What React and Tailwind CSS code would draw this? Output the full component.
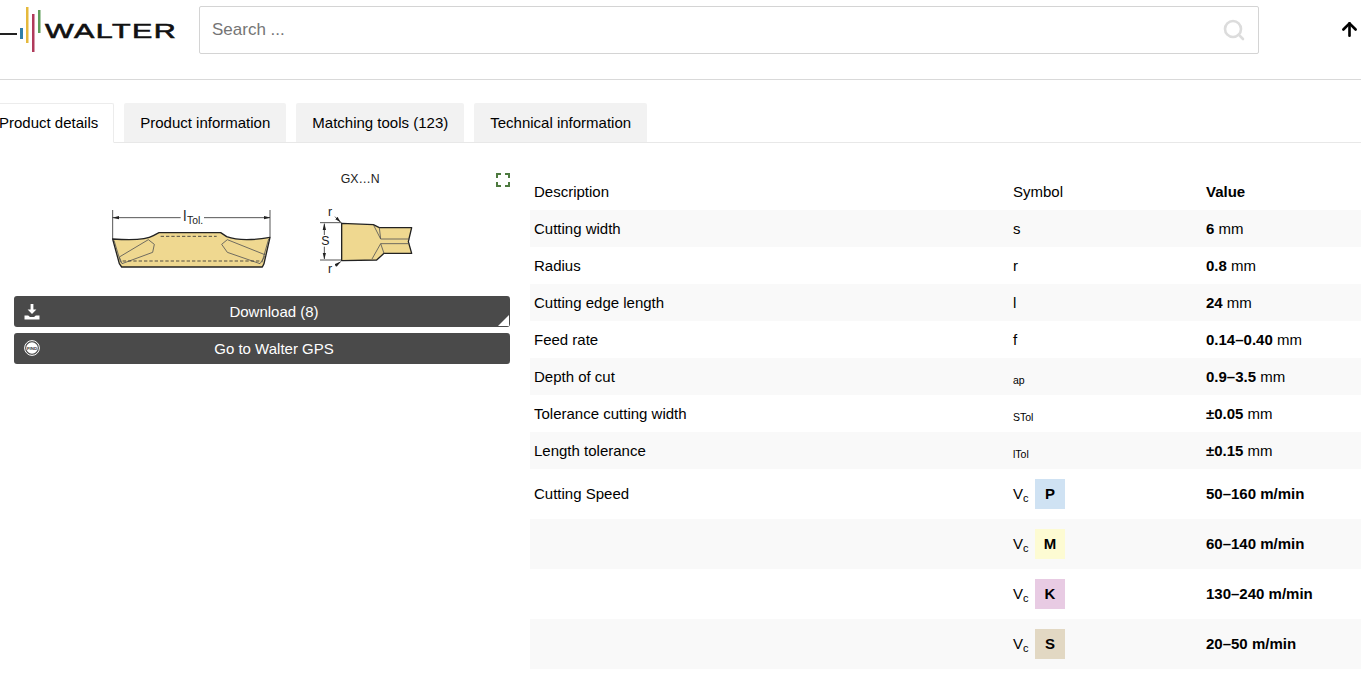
import React from 'react';
import { ArrowUp, Search } from 'lucide-react';

const ROWS = [
  { label: 'Cutting width', symbol: 's', value: '6', unit: 'mm' },
  { label: 'Radius', symbol: 'r', value: '0.8', unit: 'mm' },
  { label: 'Cutting edge length', symbol: 'l', value: '24', unit: 'mm' },
  { label: 'Feed rate', symbol: 'f', value: '0.14–0.40', unit: 'mm' },
  { label: 'Depth of cut', sub: 'ap', value: '0.9–3.5', unit: 'mm' },
  { label: 'Tolerance cutting width', sub: 'STol', value: '±0.05', unit: 'mm' },
  { label: 'Length tolerance', sub: 'lTol', value: '±0.15', unit: 'mm' },
];

const SPEEDS = [
  { label: 'Cutting Speed', code: 'P', color: 'bg-[#cfe2f3]', value: '50–160 m/min' },
  { label: '', code: 'M', color: 'bg-[#fdfbd3]', value: '60–140 m/min' },
  { label: '', code: 'K', color: 'bg-[#e8cbe3]', value: '130–240 m/min' },
  { label: '', code: 'S', color: 'bg-[#e2d8c3]', value: '20–50 m/min' },
];

function Logo() {
  return (
    <div className="flex items-center w-[199px] h-[60px] shrink-0">
      <svg width="45" height="60" viewBox="0 0 45 60" className="shrink-0">
        <rect x="0" y="33" width="17" height="2" fill="#222" />
        <rect x="20" y="28" width="3" height="11" fill="#2f7fa8" />
        <rect x="26" y="7" width="2.5" height="36" fill="#e5b93c" />
        <rect x="32" y="14" width="2.5" height="38" fill="#b03a5b" />
        <rect x="38" y="10" width="2.5" height="23" fill="#5f9e5a" />
      </svg>
      <span className="font-['Liberation_Sans',sans-serif] text-[21px] leading-none text-[#111] tracking-[1px] scale-x-[1.45] origin-left [-webkit-text-stroke:0.6px_#111]">
        WALTER
      </span>
    </div>
  );
}

function Tabs() {
  const tabs = ['Product information', 'Matching tools (123)', 'Technical information'];
  return (
    <div className="flex gap-[10px] h-[40px] mt-[23px] border-b border-[#e8e8e8]">
      <div className="-ml-[17px] h-[40px] px-[15px] pt-[1px] flex items-center bg-white border border-[#ececec] border-b-white rounded-t-[2px]">
        Product details
      </div>
      {tabs.map((t) => (
        <div key={t} className="h-[39px] px-[16px] pt-[1px] flex items-center bg-[#f2f2f2] rounded-t-[2px]">{t}</div>
      ))}
    </div>
  );
}

function Drawing() {
  return (
    <svg width="340" height="120" viewBox="0 0 1020 360" className="ml-[76px] mt-[22px] block">
      <defs>
        <marker id="a" markerUnits="userSpaceOnUse" markerWidth="20" markerHeight="12" refX="19" refY="6" orient="auto-start-reverse">
          <path d="M0 1 L20 6 L0 11 Z" fill="#222" />
        </marker>
      </defs>
      <text x="752" y="54" fontSize="37" fill="#222" fontFamily="Liberation Sans, sans-serif">GX…N</text>

      <g stroke="#333" strokeWidth="2.5" fill="none">
        <path d="M68 135V222M540 135V217" />
        <path d="M68 158H272" markerStart="url(#a)" />
        <path d="M342 158H540" markerEnd="url(#a)" />
      </g>
      <text x="280" y="168" fontSize="42" fill="#222" fontFamily="Liberation Sans, sans-serif">l</text>
      <text x="291" y="176" fontSize="31" fill="#222" fontFamily="Liberation Sans, sans-serif">Tol.</text>
      <path d="M68 222C120 226 170 224 190 212L207 203H392L410 215C440 226 490 226 540 217L522 296L517 306H95L88 296Z" fill="#efd890" stroke="#222" strokeWidth="4" strokeLinejoin="round" />
      <g stroke="#555" strokeWidth="2.5" fill="none">
        <path d="M175 224L193 238L188 262L96 296M175 224L88 276L96 296" />
        <path d="M412 224L395 238L412 262L510 296M412 224L527 270L510 296" />
        <path d="M72 226L92 292M536 222L516 292" />
      </g>
      <g stroke="#333" strokeWidth="2.5" strokeDasharray="10 6" fill="none">
        <path d="M212 214H380" />
        <path d="M98 288H510" />
      </g>

      <path d="M755 175L850 179L868 188H965L955 230L965 265H882L860 285L755 287Z" fill="#efd890" stroke="#222" strokeWidth="4" strokeLinejoin="round" />
      <g stroke="#555" strokeWidth="2.5" fill="none">
        <path d="M850 179L872 222L868 188M872 222H958M872 236H958M872 236L882 265M872 236L846 282" />
      </g>
      <g stroke="#333" strokeWidth="2.5" fill="none">
        <path d="M690 173H755M690 285H755" />
        <path d="M703 210V176" markerEnd="url(#a)" />
        <path d="M703 245V282" markerEnd="url(#a)" />
        <path d="M735 155L752 172" markerEnd="url(#a)" />
        <path d="M735 303L752 290" markerEnd="url(#a)" />
      </g>
      <text x="694" y="240" fontSize="37" fill="#222" fontFamily="Liberation Sans, sans-serif">S</text>
      <text x="714" y="152" fontSize="37" fill="#222" fontFamily="Liberation Sans, sans-serif">r</text>
      <text x="714" y="324" fontSize="37" fill="#222" fontFamily="Liberation Sans, sans-serif">r</text>
    </svg>
  );
}

function DownloadIcon() {
  return (
    <svg width="16" height="16" viewBox="0 0 16 16" fill="#fff">
      <path d="M6.6 0H9.4V5.4H12.4L8 10L3.6 5.4H6.6Z" />
      <path d="M0.5 11.5H4.2L6 13H10L11.8 11.5H15.5V15.5H0.5Z" />
    </svg>
  );
}

function FindIcon() {
  return (
    <svg width="16" height="16" viewBox="0 0 16 16">
      <circle cx="8" cy="8" r="7.4" fill="none" stroke="#fff" strokeWidth="1" />
      <circle cx="8" cy="8" r="5.8" fill="#fff" />
      <text x="8" y="9.6" textAnchor="middle" fontSize="4.4" fontWeight="700" fill="#333" fontFamily="Liberation Sans, sans-serif">FIND</text>
    </svg>
  );
}

function LeftPanel() {
  return (
    <div className="w-[496px] ml-[14px] shrink-0 relative">
      <button className="absolute right-0 top-[30px]" aria-label="Expand">
        <svg width="14" height="14" viewBox="0 0 14 14" fill="none" stroke="#4d7a3f" strokeWidth="2">
          <path d="M1 5V1H5M9 1H13V5M13 9V13H9M5 13H1V9" />
        </svg>
      </button>
      <Drawing />
      <div className="mt-[11px] flex flex-col gap-[6px]">
        <div className="relative h-[31px] bg-[#4a4a4a] rounded-[3px] pt-[1px] text-white flex items-center justify-center pl-[24px]">
          <span className="absolute left-[10px] top-[8px]"><DownloadIcon /></span>
          Download (8)
          <span className="absolute right-[1px] bottom-[1px] w-0 h-0 border-l-[11px] border-l-transparent border-b-[11px] border-b-white" />
        </div>
        <div className="relative h-[31px] bg-[#4a4a4a] rounded-[3px] pt-[1px] text-white flex items-center justify-center pl-[24px]">
          <span className="absolute left-[10px] top-[7px]"><FindIcon /></span>
          Go to Walter GPS
        </div>
      </div>
    </div>
  );
}

function SpecTable() {
  return (
    <div className="flex-1 ml-[20px] mt-[30px]">
      <div className="grid grid-cols-[479px_193px_1fr] h-[37px] pt-[1px] items-center pl-[4px]">
        <div>Description</div>
        <div>Symbol</div>
        <div className="font-bold">Value</div>
      </div>
      {ROWS.map((r, i) => (
        <div key={r.label} className={`grid grid-cols-[479px_193px_1fr] h-[37px] pt-[1px] items-center pl-[4px] ${i % 2 === 0 ? 'bg-[#f9f9f9]' : 'bg-white'}`}>
          <div>{r.label}</div>
          <div>{r.symbol}{r.sub && <span className="text-[10.5px] relative top-[2px]">{r.sub}</span>}</div>
          <div><b>{r.value}</b> {r.unit}</div>
        </div>
      ))}
      {SPEEDS.map((s, i) => (
        <div key={s.code} className={`grid grid-cols-[479px_193px_1fr] h-[50px] pt-[1px] items-center pl-[4px] ${i % 2 === 1 ? 'bg-[#f9f9f9]' : 'bg-white'}`}>
          <div>{s.label}</div>
          <div className="flex items-center">
            <span className="w-[22px]">V<span className="text-[11px] relative top-[3px]">c</span></span>
            <span className={`w-[30px] h-[30px] -translate-y-px pt-[1px] flex items-center justify-center font-bold ${s.color}`}>{s.code}</span>
          </div>
          <div className="font-bold">{s.value}</div>
        </div>
      ))}
    </div>
  );
}

export default function App() {
  return (
    <div className="h-[684px] w-[1361px] overflow-hidden bg-white text-[15px] text-black font-['Liberation_Sans',Arial,sans-serif]">
      <header className="h-[80px] border-b border-[#d9d9d9] flex items-start pt-[6px]">
        <div className="-mt-[6px]"><Logo /></div>
        <div className="w-[1060px] h-[48px] border border-[#d4d4d4] rounded-[2px] flex items-center justify-between pl-[12px] pr-[12px]">
          <span className="text-[17px] text-[#757575]">Search ...</span>
          <Search size={24} strokeWidth={2.6} className="text-[#dcdcdc]" />
        </div>
        <ArrowUp size={21} strokeWidth={3} className="ml-[80px] mt-[13px] text-black" />
      </header>
      <Tabs />
      <div className="flex">
        <LeftPanel />
        <SpecTable />
      </div>
    </div>
  );
}
